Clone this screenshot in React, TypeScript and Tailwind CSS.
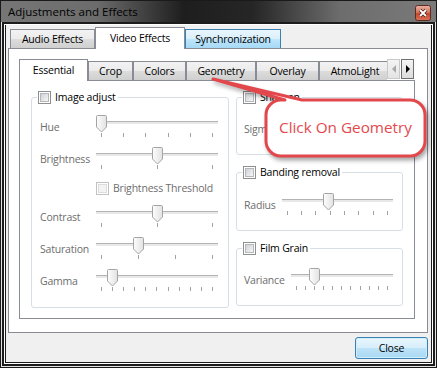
import React from "react";

const FONT = "font-[family-name:'Open_Sans',sans-serif]";

const CheckBox = ({ disabled = false }: { disabled?: boolean }) => (
  <span
    className={`block w-[13px] h-[13px] shrink-0 border p-[1px] bg-white ${
      disabled ? "border-[#c2c2c2]" : "border-[#8e8f8f]"
    }`}
  >
    <span
      className={`block w-full h-full border ${
        disabled
          ? "border-[#dcdcdc] bg-[#f3f3f3]"
          : "border-[#b4b8bd] bg-[linear-gradient(135deg,#cfd2d6,#f6f6f6)]"
      }`}
    />
  </span>
);

const Handle = () => (
  <svg width="11" height="18" viewBox="0 0 11 18">
    <defs>
      <linearGradient id="hnd" x1="0" y1="0" x2="1" y2="0">
        <stop offset="0" stopColor="#fdfdfd" />
        <stop offset="1" stopColor="#e2e2e2" />
      </linearGradient>
    </defs>
    <path
      d="M1.5 0.5h8a1 1 0 0 1 1 1v10.5l-5 5l-5 -5V1.5a1 1 0 0 1 1 -1z"
      fill="url(#hnd)"
      stroke="#a4a4a4"
    />
  </svg>
);

// pos = handle centre, px from the slider's left edge
const Slider = ({ pos, ticks }: { pos: number; ticks: number }) => (
  <div className="relative flex flex-col h-[24px] w-full pt-[6px]">
    <div className="h-[3px] border-t border-[#b3b3b3] bg-[#e8e8e8]" />
    <div className="mt-[9px] flex justify-between px-[5px]">
      {Array.from({ length: ticks }, (_, i) => (
        <span key={i} className="block w-px h-[4px] bg-[#a3a3a3]" />
      ))}
    </div>
    <span className="absolute top-0 flex" style={{ left: pos - 5 }}>
      <Handle />
    </span>
  </div>
);

const Group = ({
  title,
  className,
  children,
}: {
  title: string;
  className: string;
  children: React.ReactNode;
}) => (
  <fieldset className="border border-[#d5dfe5] rounded-[3px]">
    <legend className="ml-[5px] px-[1px] pr-[2px]">
      <span className="flex items-center gap-[4px] h-[13px] text-black">
        <CheckBox />
        <span className="leading-[13px]">{title}</span>
      </span>
    </legend>
    <div className={className}>{children}</div>
  </fieldset>
);

const tabBase = "flex items-center justify-center border border-b-0 shrink-0";
const tabIdle =
  "h-[19px] pt-[1px] border-[#898c95] bg-[linear-gradient(#f2f2f2,#ebebeb_50%,#dddddd_50%,#cfcfcf)]";
const tabOn = "h-[22px] -mb-px relative z-10 bg-white border-[#898c95]";
const tabHover =
  "h-[19px] pt-[1px] border-[#3c7fb1] bg-[linear-gradient(#eaf6fd,#d9f0fc_50%,#bee6fd_50%,#a7d9f5)]";

const Row = ({ label, pos, ticks }: { label: string; pos: number; ticks: number }) => (
  <div className="flex items-center">
    <span className="w-[56px] text-[#6d6d6d]">{label}</span>
    <div className="w-[122px]">
      <Slider pos={pos} ticks={ticks} />
    </div>
  </div>
);

const RightRow = ({ label, pos, ticks }: { label: string; pos: number; ticks: number }) => (
  <div className="flex items-center gap-[6px]">
    <span className="text-[#6d6d6d]">{label}</span>
    <div className="flex-1">
      <Slider pos={pos} ticks={ticks} />
    </div>
  </div>
);

export default function App() {
  return (
    <div className={`relative w-[437px] h-[368px] ${FONT} text-[10.5px] tracking-[-0.2px] leading-none`}>
      <div className="flex flex-col w-full h-full border border-[#1a1a1a] bg-[linear-gradient(90deg,#767676_0%,#6c6c6c_22%,#1e1e1e_42%,#262626_58%,#6d6d6d_78%,#7a7a7a_100%)]">
        {/* title bar */}
        <div className="h-[21px] flex items-center pl-[7px] pr-[5px] shrink-0">
          <span className="text-[11.5px] tracking-normal text-black">Adjustments and Effects</span>
          <svg className="ml-auto mt-[3px]" width="16" height="16" viewBox="0 0 16 16">
            <defs>
              <linearGradient id="xbtn" x1="0" y1="0" x2="0" y2="1">
                <stop offset="0" stopColor="#eab3a6" />
                <stop offset="0.45" stopColor="#d9765f" />
                <stop offset="0.55" stopColor="#c8472c" />
                <stop offset="1" stopColor="#d8735a" />
              </linearGradient>
            </defs>
            <rect x="0.5" y="0.5" width="15" height="15" rx="2" fill="url(#xbtn)" stroke="#5b2b22" />
            <path d="M5 5l6 6M11 5l-6 6" stroke="#4a2019" strokeWidth="3.2" />
            <path d="M5 5l6 6M11 5l-6 6" stroke="#fff" strokeWidth="1.8" />
          </svg>
        </div>

        {/* frame stripes */}
        <div className="flex-1 flex border-x border-b border-[#e4e4e4]">
          <div className="flex-1 flex border-2 border-[#1c1c1c]">
            <div className="flex-1 flex border border-white">
              <div className="flex-1 flex flex-col border-x border-b border-[#1c1c1c] bg-[#f0f0f0] pl-[2px] pr-[3px] pt-[2px]">
                {/* outer tabs */}
                <div className="flex items-end h-[21px] ml-[2px]">
                  <div className={`${tabBase} ${tabIdle} w-[85px]`}>Audio Effects</div>
                  <div className={`${tabBase} ${tabOn} w-[90px]`}>Video Effects</div>
                  <div className={`${tabBase} ${tabHover} w-[96px]`}>Synchronization</div>
                </div>
                <div className="h-[285px] border border-[#898c95] bg-white pt-[10px] pl-[10px]">
                  {/* inner tabs */}
                  <div className="w-[396px]">
                    <div className="flex items-end h-[21px]">
                      <div className="flex items-end w-[368px] overflow-x-clip">
                        <div className={`${tabBase} ${tabOn} w-[69px]`}>Essential</div>
                        <div className={`${tabBase} ${tabIdle} w-[45px]`}>Crop</div>
                        <div className={`${tabBase} ${tabIdle} w-[53px]`}>Colors</div>
                        <div className={`${tabBase} ${tabIdle} w-[70px]`}>Geometry</div>
                        <div className={`${tabBase} ${tabIdle} w-[63px]`}>Overlay</div>
                        <div className={`${tabBase} ${tabIdle} w-[72px]`}>AtmoLight</div>
                      </div>
                      <div className="flex self-start h-[20px] gap-px">
                        <div className="w-[13px] h-full border border-[#c9c9c9] bg-[linear-gradient(#f4f4f4,#e4e4e4)] flex items-center justify-center">
                          <span className="block w-0 h-0 border-y-[4px] border-y-transparent border-r-[4px] border-r-[#a8a8a8]" />
                        </div>
                        <div className="w-[13px] h-full border border-[#707070] bg-[linear-gradient(#f4f4f4,#dcdcdc)] flex items-center justify-center">
                          <span className="block w-0 h-0 border-y-[4px] border-y-transparent border-l-[4px] border-l-black" />
                        </div>
                      </div>
                    </div>
                    <div className="h-[239px] border border-[#898c95] bg-white pt-[10px] pl-[11px] flex gap-[7px] items-start">
                      <div className="w-[198px]">
                        <Group title="Image adjust" className="pt-[11px] pb-[14px] pl-[8px]">
                          <div className="flex flex-col gap-[8px]">
                            <Row label="Hue" pos={5} ticks={6} />
                            <Row label="Brightness" pos={61} ticks={3} />
                            <div className="h-[17px] mt-[1px] flex items-center gap-[4px] ml-[56px] text-[#6d6d6d]">
                              <CheckBox disabled />
                              <span>Brightness Threshold</span>
                            </div>
                            <Row label="Contrast" pos={61} ticks={3} />
                            <Row label="Saturation" pos={42} ticks={4} />
                            <Row label="Gamma" pos={16} ticks={11} />
                          </div>
                        </Group>
                      </div>
                      <div className="flex flex-col gap-[11px] w-[167px]">
                        <Group title="Sharpen" className="pt-[13px] pb-[13px] pl-[7px] pr-[9px]">
                          <RightRow label="Sigma" pos={30} ticks={8} />
                        </Group>
                        <Group title="Banding removal" className="pt-[14px] pb-[13px] pl-[7px] pr-[9px]">
                          <RightRow label="Radius" pos={46} ticks={8} />
                        </Group>
                        <Group title="Film Grain" className="pt-[13px] pb-[13px] pl-[7px] pr-[9px]">
                          <RightRow label="Variance" pos={23} ticks={11} />
                        </Group>
                      </div>
                    </div>
                  </div>
                </div>
                <div className="flex justify-end mt-[4px]">
                  <button className="w-[73px] h-[22px] rounded-[3px] border border-[#3c7fb1] bg-[linear-gradient(#e9f6fd,#d6eefb_50%,#bde3f8_50%,#a9d8f3)] shadow-[inset_0_0_0_1px_#cfeefe] text-black">
                    Close
                  </button>
                </div>
              </div>
            </div>
          </div>
        </div>
      </div>

      {/* callout */}
      <svg
        className="absolute left-0 top-0 pointer-events-none drop-shadow-[2px_3px_2px_rgba(0,0,0,0.35)]"
        width="437"
        height="368"
      >
        <path
          d="M213 79L302 100H410A15 15 0 0 1 425 115V141A15 15 0 0 1 410 156H281A15 15 0 0 1 266 141V115A15 15 0 0 1 281 100H285Z"
          fill="#fff"
          stroke="#e2474b"
          strokeWidth="3"
          strokeLinejoin="round"
        />
      </svg>
      <div className="absolute left-[266px] top-[100px] w-[159px] h-[56px] flex items-center justify-center text-[15.3px] tracking-normal text-[#e4484d]">
        Click On Geometry
      </div>
    </div>
  );
}
